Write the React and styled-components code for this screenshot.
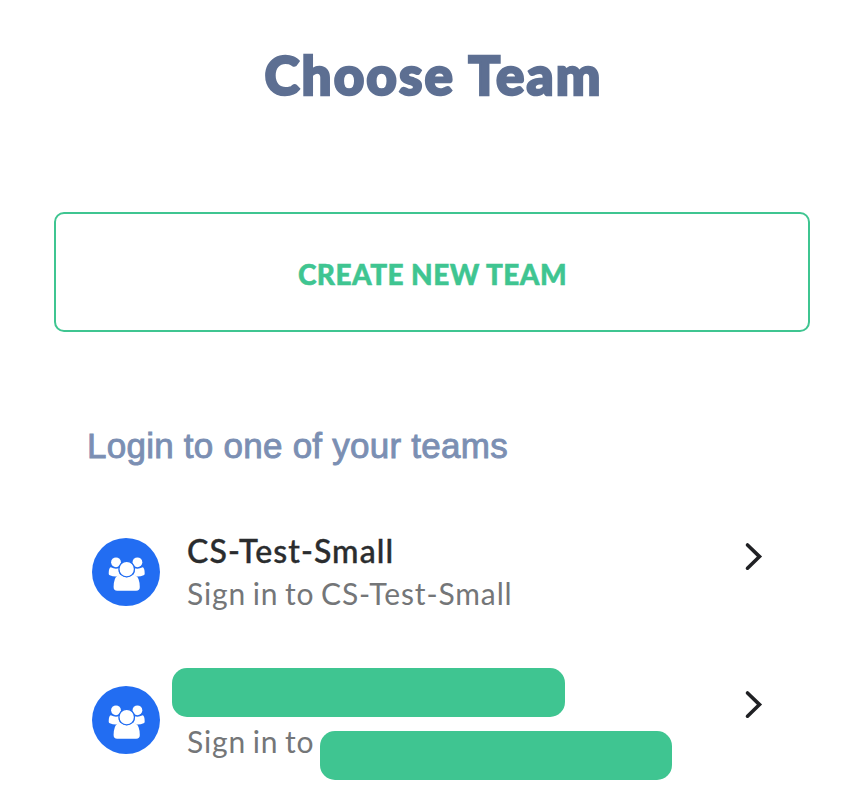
import React from "react";
import styled, { createGlobalStyle } from "styled-components";

const GlobalStyle = createGlobalStyle`
  * { box-sizing: border-box; }
  body { margin: 0; background: #fff; font-family: Lato, sans-serif; }
`;

const Page = styled.main`
  display: flex;
  flex-direction: column;
  width: 856px;
  height: 802px;
  overflow: hidden;
  padding: 0 46px 0 54px;
  background: #fff;
`;

const Title = styled.h1`
  margin: 39px 0 0;
  height: 73px;
  line-height: 72px;
  text-align: center;
  white-space: nowrap;
  font-size: 53px;
  font-weight: 900;
  letter-spacing: 2.1px;
  padding-left: 3px;
  -webkit-text-stroke: 2.4px #5d6f92;
  color: #5d6f92;
`;

const CreateButton = styled.button`
  margin-top: 100px;
  height: 120px;
  padding: 4px 0 0 1px;
  border: 2px solid #3fc591;
  border-radius: 10px;
  background: #fff;
  color: #3fc591;
  font: 900 28px/40px Lato, sans-serif;
  letter-spacing: 0.45px;
  -webkit-text-stroke: 0.5px #3fc591;
`;

const Subtitle = styled.h2`
  margin: 94px 0 0 33px;
  font: 400 35px/40px "Liberation Sans", Arial, sans-serif;
  letter-spacing: 0.25px;
  -webkit-text-stroke: 0.9px #7b8fb3;
  color: #7b8fb3;
`;

const TeamList = styled.ul`
  display: flex;
  flex-direction: column;
  gap: 48px;
  margin: 62px 0 0;
  padding: 0 0 0 38px;
  list-style: none;
`;

const TeamRow = styled.li`
  display: flex;
  height: 100px;
`;

const Avatar = styled.div`
  width: 68px;
  height: 68px;
  margin-top: 10px;
  border-radius: 50%;
  background: #226df2;
`;

const Details = styled.div`
  position: relative;
  width: 540px;
  padding-left: 27px;
  white-space: nowrap;
`;

const TeamName = styled.div`
  height: 44px;
  font: 500 32px/46px Lato, sans-serif;
  letter-spacing: 1.1px;
  -webkit-text-stroke: 0.4px #2a2c2e;
  color: #2a2c2e;
`;

const TeamHint = styled.div`
  height: 42px;
  font: 400 30px/42px Lato, sans-serif;
  letter-spacing: 0.88px;
  word-spacing: -2px;
  color: #747678;
`;

const Redaction = styled.span`
  position: absolute;
  left: ${(p) => p.$x}px;
  top: ${(p) => p.$y}px;
  width: ${(p) => p.$w}px;
  height: 49px;
  border-radius: 15px;
  background: #3fc591;
`;

const Chevron = styled.svg`
  width: 20px;
  height: 30px;
  margin: 14px 0 0 44px;
`;

function TeamIcon() {
  return (
    <svg width="68" height="68" viewBox="0 0 68 68" fill="#fff">
      <circle cx="24" cy="24.3" r="4.9" />
      <circle cx="45.4" cy="24.3" r="4.9" />
      <path d="M18.8 29.3Q23.5 31.7 27.2 30 25.8 34.2 28.4 37.2 26 37.6 24.2 38.6 20.8 38.7 17.8 37.3 16.7 36.8 16.7 35.4 16.8 29.5 18.8 29.3Z" />
      <path d="M50.6 29.3Q45.9 31.7 42.2 30 43.6 34.2 41 37.2 43.4 37.6 45.2 38.6 48.6 38.7 51.6 37.3 52.7 36.8 52.7 35.4 52.6 29.5 50.6 29.3Z" />
      <path d="M28.7 36.8Q34.7 41.7 40.7 36.8 45 37 46.5 41 47.8 44.5 47.8 49 47.8 52.8 44.2 52.8H25.2Q21.6 52.8 21.6 49 21.6 44.5 22.9 41 24.4 37 28.7 36.8Z" />
      <circle cx="34.7" cy="31.1" r="7.8" stroke="#226df2" strokeWidth="1.3" />
    </svg>
  );
}

function Team({ children }) {
  return (
    <TeamRow>
      <Avatar><TeamIcon /></Avatar>
      <Details>{children}</Details>
      <Chevron viewBox="0 0 20 30" fill="none" stroke="#202124" strokeWidth="3.6" strokeLinecap="round">
        <path d="M3.5 3 15.5 14.6 3.5 26.2" />
      </Chevron>
    </TeamRow>
  );
}

export default function App() {
  return (
    <>
      <GlobalStyle />
      <Page>
        <Title>Choose Team</Title>
        <CreateButton>CREATE NEW TEAM</CreateButton>
        <Subtitle>Login to one of your teams</Subtitle>
        <TeamList>
          <Team>
            <TeamName>CS-Test-Small</TeamName>
            <TeamHint>Sign in to CS-Test-Small</TeamHint>
          </Team>
          <Team>
            <TeamName />
            <TeamHint>Sign in to</TeamHint>
            <Redaction $x={12} $y={-8} $w={393} />
            <Redaction $x={159.5} $y={54.5} $w={352} />
          </Team>
        </TeamList>
      </Page>
    </>
  );
}
